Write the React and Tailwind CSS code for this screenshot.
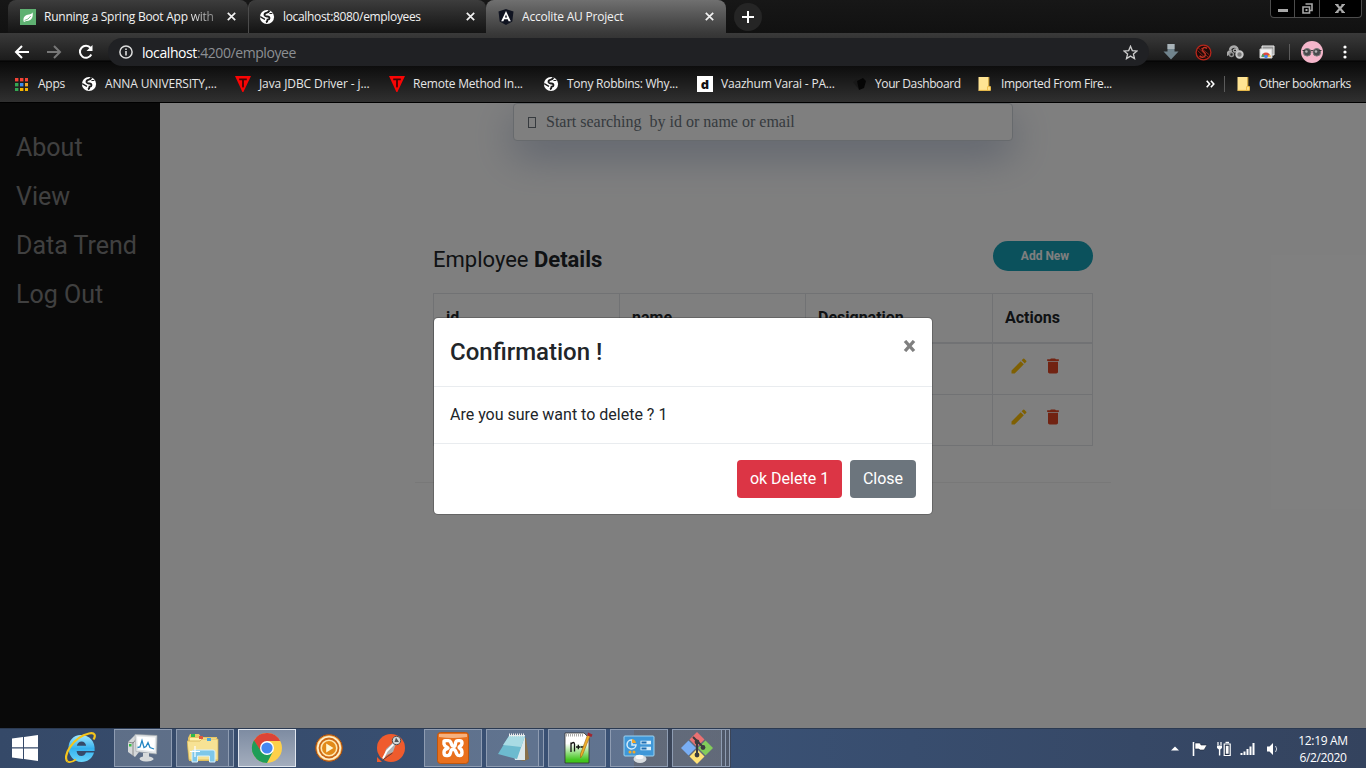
import React from "react";

const Globe = () => (
  <svg width="16" height="16" viewBox="0 0 16 16" className="shrink-0">
    <circle cx="8" cy="8" r="7.1" fill="#fff" />
    <path d="M10.6 1.6Q9.4 3.6 7.2 3.9 5.2 4.6 5.6 6.3 6 7.6 8.4 7.4 10.6 7.6 10.4 9.4 10.4 10.4 8.6 10.6 8.4 12.8 7 13.4" stroke="#1c1c1c" strokeWidth="1.9" fill="none" />
    <path d="M1.2 7.6 4.6 9.6 6 10.4" stroke="#1c1c1c" strokeWidth="1.3" fill="none" />
    <path d="M10.4 4.6 13.4 4.4" stroke="#1c1c1c" strokeWidth="1" />
  </svg>
);

const Close = () => (
  <svg width="9" height="9" viewBox="0 0 9 9" className="shrink-0">
    <path d="M.8.8 8.2 8.2M8.2.8.8 8.2" stroke="#f1f1f1" strokeWidth="1.7" />
  </svg>
);

const TIcon = () => (
  <svg width="16" height="16" viewBox="0 0 16 16" className="shrink-0">
    <path d="M0 0H16L8.4 16H7.4Z" fill="#f90505" />
    <path d="M4.2 2.6H11.8V4.2H8.9V10.5L8 12 7.1 10.5V4.2H4.2Z" fill="#3c0606" />
  </svg>
);

const Folder = () => (
  <svg width="13" height="14" viewBox="0 0 13 14" className="shrink-0">
    <path d="M.5 0H10.5V9.5H12.5V13.5H.5Z" fill="#ffe493" />
    <path d="M.5 13.4H12.4V9.6H9.6V13.4M10.8 0V9" stroke="#efbd48" fill="none" />
  </svg>
);

function Tabs() {
  return (
    <div className="flex h-[33px] bg-gradient-to-b from-[#171717] to-[#111] pl-2">
      <div className="flex h-[33px] w-[240px] items-center rounded-t-lg bg-gradient-to-b from-[#3d3d3d] to-[#141414] pl-3 pr-[12px]">
        <svg width="16" height="16" viewBox="0 0 16 16" className="shrink-0">
          <rect width="16" height="16" fill="#5fb172" />
          <path d="M3.5 12C3 7.5 6 6 8.8 5.6 10.8 5.3 12 4.6 12.6 3.2 13.6 8.5 11 12.3 6.2 11.9L4 13Z" fill="#fff" />
          <path d="M4.6 11.4Q8.4 10.8 10.8 7" stroke="#5fb172" fill="none" strokeWidth=".8" />
        </svg>
        <span className="ml-2 w-[174px] overflow-hidden whitespace-nowrap tracking-[-0.25px]">
          Running a Spring Boot App <span className="bg-gradient-to-r from-[#f2f2f2] to-[#8a8a8a] bg-clip-text text-transparent">with</span>
        </span>
        <span className="ml-auto flex"><Close /></span>
      </div>
      <div className="flex h-[33px] w-[238px] items-center rounded-t-lg border-l border-[#4b4b4b] bg-gradient-to-b from-[#3d3d3d] to-[#141414] pl-[10px] pr-[11px]">
        <Globe />
        <span className="ml-2 whitespace-nowrap tracking-[-0.34px]">localhost:8080/employees</span>
        <span className="ml-auto flex"><Close /></span>
      </div>
      <div className="flex h-[33px] w-[240px] items-center rounded-t-lg bg-gradient-to-b from-[#707070] to-[#3a3a3a] pl-3 pr-[12px]">
        <svg width="16" height="16" viewBox="0 0 16 16" className="shrink-0">
          <path d="M8 0 15.5 2.6 14.3 12.5 8 16 1.7 12.5.5 2.6Z" fill="#101421" />
          <path d="M8 2 12.8 12.2H10.6L9.8 10.2H6.2L5.4 12.2H3.2ZM8 5.4 6.9 8.4H9.1Z" fill="#fff" fillRule="evenodd" />
        </svg>
        <span className="ml-2 whitespace-nowrap tracking-[-0.2px]">Accolite AU Project</span>
        <span className="ml-auto flex"><Close /></span>
      </div>
      <div className="ml-2 mt-[3px] flex h-7 w-7 items-center justify-center rounded-full bg-[#252525]">
        <svg width="12" height="12" viewBox="0 0 12 12">
          <path d="M6 0V12M0 6H12" stroke="#fff" strokeWidth="2" />
        </svg>
      </div>
      <div className="ml-auto mr-1 flex h-[18px] w-[92px] rounded-b border-x border-b border-[#4c4c4c] bg-black">
        <div className="flex w-[24px] items-center justify-center border-r border-[#4c4c4c]">
          <span className="mt-[4px] h-[3px] w-[10px] bg-[#a8a8a8]" />
        </div>
        <div className="flex w-[25px] items-center justify-center border-r border-[#4c4c4c]">
          <svg width="11" height="11" viewBox="0 0 11 11">
            <path d="M3.5 1H10V7.5H8M1 4H7.5V10H1Z" stroke="#a8a8a8" strokeWidth="1.6" fill="none" />
            <rect x="3.5" y="6" width="2" height="2" fill="#a8a8a8" />
          </svg>
        </div>
        <div className="flex flex-1 items-center justify-center">
          <svg width="10" height="9" viewBox="0 0 10 9" className="mr-[2px]">
            <path d="M1.5.5 8.5 8.5M8.5.5 1.5 8.5" stroke="#a8a8a8" strokeWidth="2.2" />
            <path d="M0 .5H3.5M6.5.5H10M0 8.5H3.5M6.5 8.5H10" stroke="#a8a8a8" />
          </svg>
        </div>
      </div>
    </div>
  );
}

function Toolbar() {
  return (
    <div className="flex h-[33px] items-center pt-[5px]">
      <svg width="16" height="14" viewBox="0 0 16 14" className="ml-[14px] shrink-0">
        <path d="M15 7H2M8 1 2 7 8 13" stroke="#fff" strokeWidth="2" fill="none" />
      </svg>
      <svg width="16" height="14" viewBox="0 0 16 14" className="ml-[17px] shrink-0">
        <path d="M0 7H13M7 1 13 7 7 13" stroke="#777" strokeWidth="2" fill="none" />
      </svg>
      <svg width="16" height="16" viewBox="0 0 16 16" className="ml-[15px] shrink-0">
        <path d="M13.3 10.5A6 6 0 1 1 12.6 4" stroke="#fff" strokeWidth="2" fill="none" />
        <path d="M14.5 1V7H8.5Z" fill="#fff" />
      </svg>
      <div className="ml-[14px] flex h-7 w-[1041px] items-center rounded-full bg-[#202124] pl-[11px] pr-[11px]">
        <svg width="14" height="14" viewBox="0 0 14 14" className="shrink-0">
          <circle cx="7" cy="7" r="6.1" stroke="#ddd" strokeWidth="1.5" fill="none" />
          <path d="M7 6V10.5M7 3.5V5" stroke="#ddd" strokeWidth="1.6" />
        </svg>
        <span className="ml-[9px] text-[14px] tracking-[-0.42px] text-white">
          localhost<span className="text-[#8c8f93]">:4200/employee</span>
        </span>
        <svg width="15" height="15" viewBox="0 0 15 15" className="ml-auto">
          <path d="M7.5 1.3 9.3 5.6 14 6 10.4 9 11.5 13.6 7.5 11.1 3.5 13.6 4.6 9 1 6 5.7 5.6Z" stroke="#ccc" strokeWidth="1.3" fill="none" />
        </svg>
      </div>
      <svg width="16" height="16" viewBox="0 0 16 16" className="ml-[14px] shrink-0">
        <path d="M4.5 0H11.5V7.5H15.5L8 15.5.5 7.5H4.5Z" fill="#71848d" />
        <path d="M4.5 0H11.5V5H4.5Z" fill="#a9b3b8" />
      </svg>
      <svg width="17" height="17" viewBox="0 0 17 17" className="ml-4 shrink-0">
        <circle cx="8.5" cy="8.5" r="7.4" stroke="#b8261b" strokeWidth="1.3" fill="#1d0a08" />
        <path d="M12 4.5C10 2.6 7 3.6 7.4 6.2 7.8 8.3 11 8.6 10.4 11.2 9.8 13.6 6 13.8 4.6 11.8" stroke="#c33425" strokeWidth="1.5" fill="none" />
        <path d="M3 3.6 13.6 13.6M6 4 14 10.6M2.6 6.6 10.6 14" stroke="#9c2a1e" strokeWidth=".8" fill="none" />
      </svg>
      <svg width="17" height="14" viewBox="0 0 17 14" className="ml-[15px] shrink-0">
        <path d="M1 10.5A3 3 0 0 1 5 6.5M3 5A4 4 0 0 1 10 3L11 6" stroke="#aaa" strokeWidth="2.4" fill="none" />
        <circle cx="4.5" cy="9.5" r="2" stroke="#8f8f8f" strokeWidth="1.5" fill="none" />
        <circle cx="8" cy="5.5" r="1.6" stroke="#ddd" fill="none" />
        <circle cx="12.5" cy="9.5" r="3.2" stroke="#c8c8c8" strokeWidth="2" fill="#777" />
      </svg>
      <svg width="16" height="15" viewBox="0 0 16 15" className="ml-[15px] shrink-0">
        <path d="M3 1H15V10H3Z" fill="#999" stroke="#eee" />
        <path d="M1 4H13V13H1Z" fill="#f4f4f4" stroke="#ccc" />
        <path d="M2.5 12A4.5 4.5 0 0 1 11.5 12Z" fill="#de4a3c" />
        <path d="M2.5 12A4.5 4.5 0 0 1 4 8.6L6 12Z" fill="#4ba15a" />
        <path d="M11.5 12A4.5 4.5 0 0 0 10.6 9.2L8 12Z" fill="#f6c344" />
        <circle cx="7" cy="11.5" r="1.8" fill="#4382ea" />
      </svg>
      <div className="ml-[14px] h-4 w-px bg-[#5b5b5b]" />
      <svg width="22" height="22" viewBox="0 0 22 22" className="ml-[11px] shrink-0">
        <circle cx="11" cy="11" r="11" fill="#f5b6cb" />
        <circle cx="6.2" cy="11.3" r="3.8" fill="#47494c" stroke="#777" />
        <circle cx="15.8" cy="11.3" r="3.8" fill="#47494c" stroke="#777" />
        <path d="M9.5 10Q11 8.8 12.5 10M1.5 9.5H4M18 9.5H20.5" stroke="#333" fill="none" />
        <circle cx="5.4" cy="10.5" r="1.3" fill="#b3b3b3" /><circle cx="15" cy="10.5" r="1.3" fill="#b3b3b3" />
      </svg>
      <svg width="4" height="14" viewBox="0 0 4 14" className="ml-5 shrink-0">
        <circle cx="2" cy="2" r="1.6" fill="#fff" /><circle cx="2" cy="7" r="1.6" fill="#fff" /><circle cx="2" cy="12" r="1.6" fill="#fff" />
      </svg>
    </div>
  );
}

function Bookmark({ icon, label, box, text }) {
  return (
    <div className={`flex shrink-0 items-center whitespace-nowrap ${box}`}>
      {icon}
      <span className={text}>{label}</span>
    </div>
  );
}

function Bookmarks() {
  const dots = ["#f44336", "#f44336", "#f44336", "#34a853", "#3b8bf0", "#f0a728", "#34a853", "#f5b400", "#f5b400"];
  return (
    <div className="flex h-9 items-center pl-[15px] text-[#e6e6e6]">
      <Bookmark box="w-[66px]" text="ml-[10px] tracking-[-0.25px]" label="Apps" icon={
        <svg width="13" height="13" viewBox="0 0 13 13" className="shrink-0">
          {dots.map((c, i) => <rect key={i} x={(i % 3) * 5} y={Math.floor(i / 3) * 5} width="3.4" height="3.4" fill={c} />)}
        </svg>} />
      <Bookmark box="w-[154px]" text="ml-2 tracking-[-0.14px]" label="ANNA UNIVERSITY,..." icon={<Globe />} />
      <Bookmark box="w-[154px]" text="ml-2 tracking-[-0.1px]" label="Java JDBC Driver - j..." icon={<TIcon />} />
      <Bookmark box="w-[154px]" text="ml-2 tracking-[-0.2px]" label="Remote Method In..." icon={<TIcon />} />
      <Bookmark box="w-[154px]" text="ml-2 tracking-[-0.25px]" label="Tony Robbins: Why..." icon={<Globe />} />
      <Bookmark box="w-[155px]" text="ml-2 tracking-[-0.2px]" label="Vaazhum Varai - PA..." icon={
        <span className="flex h-4 w-4 items-center justify-center bg-white font-['Open_Sans',sans-serif] text-[13px] font-extrabold leading-[14px] text-[#111]">d</span>} />
      <Bookmark box="w-[126px]" text="ml-2 tracking-[-0.4px]" label="Your Dashboard" icon={
        <svg width="15" height="15" viewBox="0 0 15 15" className="shrink-0">
          <path d="M1 5 5 2 7 12 4 9Z" fill="#181818" /><path d="M5 4 11 1 14 4 12 11 7 13Z" fill="#050505" />
        </svg>} />
      <Bookmark box="w-[226px]" text="ml-[10px] tracking-[-0.35px]" label="Imported From Fire..." icon={<Folder />} />
      <svg width="9" height="8" viewBox="0 0 9 8" className="ml-[2px] shrink-0">
        <path d="M.7.8 3.6 4 .7 7.2M4.9.8 7.8 4 4.9 7.2" stroke="#fff" strokeWidth="1.6" fill="none" />
      </svg>
      <div className="ml-[9px] mr-[12px] h-4 w-px shrink-0 bg-[#5b5b5b]" />
      <Bookmark box="w-[120px]" text="ml-[9px] tracking-[-0.45px]" label="Other bookmarks" icon={<Folder />} />
    </div>
  );
}

const Pencil = () => (
  <svg width="20" height="20" viewBox="0 0 24 24" fill="#ffc107">
    <path d="M3 17.25V21h3.75L17.81 9.94l-3.75-3.75L3 17.25zM20.71 7.04a1 1 0 0 0 0-1.41l-2.34-2.34a1 1 0 0 0-1.41 0l-1.83 1.83 3.75 3.75 1.83-1.83z" />
  </svg>
);
const Trash = () => (
  <svg width="20" height="20" viewBox="0 0 24 24" fill="#e34724">
    <path d="M6 19c0 1.1.9 2 2 2h8c1.1 0 2-.9 2-2V7H6v12zM19 4h-3.5l-1-1h-5l-1 1H5v2h14V4z" />
  </svg>
);

function EmployeePage() {
  const cell = "border border-[#e3e5e8] p-3 text-left";
  return (
    <div className="flex h-[625px] bg-white">
      <nav className="flex w-40 flex-col bg-[#131313] pl-4 pt-5 text-[25px] text-[#818181]">
        {["About", "View", "Data Trend", "Log Out"].map((t) => (
          <a key={t} className="flex h-[49px] items-center">{t}</a>
        ))}
      </nav>
      <main className="flex-1">
        <div className="ml-[353px] flex h-[38px] w-[500px] items-center whitespace-pre rounded border border-[#ced4da] bg-white pl-[14px] font-['Liberation_Serif',serif] text-[16px] text-[#6c757d] shadow-[0_15px_40px_rgba(110,130,175,0.46)]">
          <span className="mr-[10px] h-[11px] w-2 border border-[#6c757d]" />
          Start searching  by id or name or email
        </div>
        <section className="ml-[255px] mt-[100px] h-[242px] w-[696px] border-b border-[#f0f0f0] px-[18px] text-[#212529]">
          <div className="flex h-[52px] items-start justify-between">
            <h2 className="pt-[2px] text-[22px] leading-[33px]">Employee <b>Details</b></h2>
            <button className="h-[30px] w-[100px] rounded-full bg-[#17a2b8] pl-[4px] text-[12px] font-bold text-white">Add New</button>
          </div>
          <table className="w-[659px] table-fixed border-collapse">
            <colgroup><col className="w-[186px]" /><col className="w-[186px]" /><col className="w-[187px]" /><col className="w-[100px]" /></colgroup>
            <thead>
              <tr className="h-[49px]">
                {["id", "name", "Designation", "Actions"].map((t) => (
                  <th key={t} className="border border-b-2 border-[#e3e5e8] px-3 text-left font-bold">{t}</th>
                ))}
              </tr>
            </thead>
            <tbody>
              {["h-[52px]", "h-[51px]"].map((height) => (
                <tr key={height} className={height}>
                  <td className={cell} /><td className={cell} /><td className={cell} />
                  <td className="border border-[#e3e5e8] py-0 pl-4">
                    <div className="flex gap-[14px] pb-1.5"><Pencil /><Trash /></div>
                  </td>
                </tr>
              ))}
            </tbody>
          </table>
        </section>
      </main>
    </div>
  );
}

function ConfirmDialog() {
  return (
    <div className="absolute inset-0 bg-black/50">
      <div className="ml-[433px] mt-[214px] w-[500px] rounded-[5px] border border-black/20 bg-white bg-clip-padding text-[#212529]">
        <div className="flex h-[69px] items-start justify-between border-b border-[#e9ecef] px-4 pt-4">
          <h4 className="text-[24px] font-medium leading-9">Confirmation !</h4>
          <svg width="13" height="12" viewBox="0 0 13 12" className="mt-[6px]">
            <path d="M2 1 11 11M11 1 2 11" stroke="#7f7f7f" strokeWidth="3.3" />
          </svg>
        </div>
        <div className="flex h-[57px] items-center border-b border-[#e9ecef] px-4 pb-px text-[16px]">Are you sure want to delete ? 1</div>
        <div className="flex h-[70px] items-center justify-end gap-2 px-4 text-[16px] text-white">
          <button className="h-[38px] w-[105px] rounded bg-[#dc3545]">ok Delete 1</button>
          <button className="h-[38px] w-[66px] rounded bg-[#6c757d]">Close</button>
        </div>
      </div>
    </div>
  );
}

function Task({ children, open, active, stack = 0 }) {
  const frame = active
    ? "border-[#dfe5ee] bg-gradient-to-b from-[#7e8ca2] to-[#a3adbd]"
    : open ? "border-[#8e9cb2] bg-white/20" : "border-transparent";
  return (
    <div className="mr-[4px] flex h-[38px] w-[58px]">
      <div className={`flex flex-1 items-center justify-center border ${frame}`}>{children}</div>
      {Array.from({ length: stack }, (_, i) => (
        <div key={i} className={`border-y border-r border-[#8e9cb2] bg-white/10 ${stack > 1 ? "w-1" : "w-[5px]"}`} />
      ))}
    </div>
  );
}

const Icon = ({ children }) => <svg width="32" height="32" viewBox="0 0 32 32" className="shrink-0">{children}</svg>;

function Taskbar() {
  return (
    <div className="flex h-10 items-start border-t border-[#2b3a52] bg-[linear-gradient(to_right,transparent_634px,rgba(60,50,45,0.4)_634px,rgba(60,50,45,0.4)_731px,transparent_731px),linear-gradient(to_right,#354968,#3a5276,#34435e)]">
      <div className="flex h-[38px] w-[50px] items-center justify-center">
        <svg width="26" height="26" viewBox="0 0 26 26">
          <path d="M0 3.5 11 2V12.3H0ZM12 1.9 26 0V12.3H12ZM0 13.4H11V24L0 22.5ZM12 13.4H26V26L12 24.1Z" fill="#fff" />
        </svg>
      </div>
      <div className="w-[2px]" />
      <Task>
        <Icon>
          <defs><linearGradient id="ie" x1="0" y1="0" x2="0" y2="1"><stop stopColor="#a2e8ff" /><stop offset=".5" stopColor="#35b2f0" /><stop offset="1" stopColor="#69d5fb" /></linearGradient></defs>
          <path d="M16 3C8 3 3.5 9 3.5 16S8.5 30 16.5 30C23 30 27.5 26 29 20.5H21C20 23 18.5 24 16.4 24 13.6 24 11.8 22 11.6 19H29.6C30.6 9.5 24.5 3 16 3ZM11.8 13.8C12.4 11 14 9.4 16.6 9.4 19.1 9.4 20.8 11 21.1 13.8Z" fill="url(#ie)" />
          <path d="M2.5 29.5C-3 24.5 8 5 24 1.5 30 .2 31 3.5 28.5 7.5" fill="none" stroke="#f6c51c" strokeWidth="2.2" />
          <path d="M2.5 29.5C4.5 31 8 29.5 11 27.4" fill="none" stroke="#f6c51c" strokeWidth="1.8" />
        </Icon>
      </Task>
      <Task open>
        <Icon>
          <path d="M1 10 8 3 12 4V20L8 25 1 20Z" fill="#d4d7d9" /><path d="M6 10V24M1 10 6 11 12 4" stroke="#777" strokeWidth=".8" fill="none" />
          <rect x="2" y="12" width="2.5" height="2.5" fill="#36be40" />
          <path d="M8 2.5 30 3.5 29.5 22 9 19.5Z" fill="#e3e6e8" stroke="#a5abae" strokeWidth=".7" /><path d="M10 4.5 28 5.4 27.5 19.5 11 17.5Z" fill="#fff" />
          <path d="M10.5 15.5 13 15 15 8.5 17 15.5 19 14.5 21 10.5 23 15.5 27 17" stroke="#2385c3" strokeWidth="1.3" fill="none" />
          <path d="M16 21H22V24.5Q27 25.5 26.5 27.5 24 30 18.5 29.5 13 29 12.5 26.5 13 25 16 24.5Z" fill="#d7dadb" />
        </Icon>
      </Task>
      <Task open stack={1}>
        <Icon>
          <path d="M1 6 3 2H12L14 5H30L31 29H2Z" fill="#e8c765" /><path d="M3 6H29V28H3Z" fill="#fff0a8" />
          <path d="M0 9H13L15 7H31V28H2Z" fill="#f7e294" stroke="#cfad4c" strokeWidth=".7" />
          <rect x="4" y="2" width="4" height="3" fill="#2fb94b" /><rect x="12" y="4" width="4" height="3" fill="#db5740" /><rect x="20" y="6" width="4" height="3" fill="#4aa6dd" />
          <path d="M5 30V20Q5 18 7 18H26Q28 18 28 20V30H22.5V24H10.5V30Z" fill="#7ec7e9" stroke="#d8f1fb" />
          <path d="M8 14V25M3 19.5H13" stroke="#fff" strokeWidth="1.2" />
        </Icon>
      </Task>
      <Task active>
        <Icon>
          <circle cx="16" cy="16" r="15" fill="#fdd04b" />
          <path d="M3 8.5 9.9 19.5 16 23 22 19.5 16 31A15 15 0 0 1 3 8.5Z" fill="#1f9d58" />
          <path d="M3 8.5A15 15 0 0 1 29.2 9H16L10 19Z" fill="#dc4437" />
          <path d="M3 8.5 9.9 19.5 14 22 9 12Z" fill="#1f9d58" />
          <path d="M3 8.5 9.6 18.5Q9 12 16 9Z" fill="#dc4437" />
          <path d="M3 8.5Q-1 16 3 23L14 24 9.6 19.3Z" fill="#1f9d58" />
          <circle cx="16" cy="16" r="7" fill="#fff" /><circle cx="16" cy="16" r="5.6" fill="#4587f2" />
        </Icon>
      </Task>
      <Task>
        <svg width="28" height="28" viewBox="0 0 28 28">
          <circle cx="14" cy="14" r="13.4" fill="#f0ad50" stroke="#a5490e" /><circle cx="14" cy="14" r="12" fill="#fff0cb" />
          <circle cx="14" cy="14" r="10.4" fill="#cc6814" /><circle cx="14" cy="14" r="8.6" fill="#ffe9b2" /><circle cx="14" cy="14" r="7" fill="#e28a19" />
          <path d="M11.2 9.5 18.5 14 11.2 18.5Z" fill="#fff6d2" />
        </svg>
      </Task>
      <Task>
        <Icon>
          <circle cx="16" cy="16" r="14" fill="#ef5b2d" /><path d="M2 25V30H7Z" fill="#ef5b2d" />
          <path d="M7 28 9.5 23 11 17 18 10.5 20.5 13 18 20 12 23Z" fill="#aeb1b3" /><path d="M8 26.5 11.8 19 18.4 12.4" stroke="#fff" strokeWidth="1.8" fill="none" />
          <path d="M7 28.5 12.5 24.5 17.5 21" stroke="#5d4038" fill="none" />
          <circle cx="21.5" cy="8.5" r="4.2" fill="#d3d7d8" stroke="#4e5356" /><path d="M21 5.5 24 10H19.5Z" fill="#4e5356" />
        </Icon>
      </Task>
      <Task open>
        <Icon>
          <rect x=".5" y=".5" width="31" height="31" rx="3" fill="#e9701d" stroke="#bd560e" />
          <path d="M2 2H30V5Q16 7 2 5Z" fill="#f6b17f" />
          <path d="M7 12V9.4Q7 8.6 8 8.6H11.4Q13 8.6 13.6 10L15 13.4Q15.4 14.4 16.6 14.4 18 14.4 18.2 13L18.6 10.6Q19 8.6 20.8 8.6H22.6Q25 8.6 25 11T22.8 14.4Q21.4 15.4 22.8 16.4 25 17.4 25 20.4T22.6 23.6Q20.6 23.6 19.8 22L18.4 18.8Q17.8 17.4 16 17.4T13.8 19.4L13.2 21.6Q12.6 23.6 10.6 23.6H9.6Q7 23.6 7 20.8T9 17.2L11 16Q9.6 14.6 8 14Z" fill="none" stroke="#fff" strokeWidth="3.4" strokeLinejoin="round" />
        </Icon>
      </Task>
      <Task open stack={1}>
        <Icon>
          <path d="M26 5 29 6 32 27 27 29 22 28Z" fill="#87704b" />
          <path d="M12 3H28L28 28 18 28Z" fill="#dbe8ec" />
          <path d="M12 4H28L20 27 1 22Z" fill="#6dbbcf" /><path d="M12 4H28L24 15 6 13Z" fill="#a9dbe4" />
          <path d="M12 3H28" stroke="#eee" strokeWidth="3" strokeDasharray="1 1" />
        </Icon>
      </Task>
      <Task open>
        <Icon>
          <defs><linearGradient id="npp" x1="0" y1="0" x2="0" y2="1"><stop offset=".35" stopColor="#fff" /><stop offset=".9" stopColor="#42c51e" /></linearGradient></defs>
          <path d="M4 1H23L28 6V31H4Z" fill="url(#npp)" stroke="#333" strokeWidth=".8" />
          <path d="M5 3H22" stroke="#aaa" strokeWidth="3" strokeDasharray="1 1" />
          <path d="M10 20V10.5M10 12Q13 9 13.5 12V19.5M15 15H19.6M17.3 12.7V17.3M20 15H23" stroke="#111" strokeWidth="1.3" fill="none" />
          <path d="M29 4 21.5 23 19.5 26 19.5 22 26.5 3Z" fill="#f0ae29" stroke="#9b6615" strokeWidth=".6" /><path d="M27 .5 31.5 2.5 30.5 5 26.4 3.6Z" fill="#a12630" />
        </Icon>
      </Task>
      <Task open>
        <Icon>
          <rect x="1" y="4" width="30" height="20" rx="1" fill="#3f97d8" stroke="#9ed4f2" />
          <path d="M9 8A4.5 4.5 0 1 0 13 13H9Z" fill="none" stroke="#d4ecfa" strokeWidth="1.5" /><path d="M9 7A5 5 0 0 1 13 11H9Z" fill="#f2a82b" />
          <path d="M17.5 10.5H28M17.5 16.5H28" stroke="#d9effb" strokeWidth="3.4" /><path d="M18.5 10.5H23.5M18.5 16.5H23.5" stroke="#1f6cb0" strokeWidth="1.8" />
          <circle cx="7" cy="20" r="1.5" fill="#f2a82b" /><circle cx="11" cy="20" r="1.5" fill="#f2a82b" />
          <ellipse cx="17" cy="27" rx="6.5" ry="4" fill="#d8dcdf" /><ellipse cx="16.5" cy="25" rx="4" ry="2.2" fill="#f6f7f8" />
        </Icon>
      </Task>
      <Task open stack={2}>
        <Icon>
          <path d="M16 0 23.5 7.5 16 15 8.5 7.5Z" fill="#ea7172" /><path d="M24.5 8.5 32 16 24.5 23.5 17 16Z" fill="#83cc5b" />
          <path d="M7.5 8.5 15 16 7.5 23.5 0 16Z" fill="#79aef4" /><path d="M16 17 23.5 24.5 16 32 8.5 24.5Z" fill="#ffe276" />
          <path d="M12 5 16 9V23M16 9 22 15" stroke="#3b3b3f" strokeWidth="2" fill="none" />
          <circle cx="16" cy="10" r="2.4" fill="#3b3b3f" /><circle cx="22" cy="15.5" r="2.4" fill="#3b3b3f" /><circle cx="16" cy="23" r="2.4" fill="#3b3b3f" />
        </Icon>
      </Task>
      <div className="ml-auto flex h-[39px] items-center">
        <svg width="8" height="5" viewBox="0 0 8 5"><path d="M0 4.5 4 .5 8 4.5Z" fill="#fff" /></svg>
        <svg width="16" height="16" viewBox="0 0 16 16" className="ml-[13px]">
          <path d="M1.5 1V15" stroke="#fff" strokeWidth="1.6" /><path d="M3 2H8L9 4H15L12 9H8L7 8H3Z" fill="#fff" stroke="#1d2738" strokeWidth=".6" />
        </svg>
        <svg width="16" height="16" viewBox="0 0 16 16" className="ml-2">
          <path d="M2 1V4M5 1V4" stroke="#fff" strokeWidth="1.2" /><path d="M1 4.5H6V7L4.3 8.6V14.5H2.9V8.6L1 7Z" fill="#fff" />
          <path d="M8.2 3H14.2V14.5H8.2Z" stroke="#fff" strokeWidth="1.2" fill="#243148" /><path d="M9.8 4.8H12.6V12.8H9.8Z" fill="#fff" /><path d="M9.5 1.5H13" stroke="#fff" strokeWidth="1.4" />
        </svg>
        <svg width="16" height="14" viewBox="0 0 16 14" className="ml-2">
          <path d="M1.5 11V13M4.5 9.5V13M7.5 7V13M10.5 4.5V13M13.5 1V13" stroke="#fff" strokeWidth="2" />
        </svg>
        <svg width="14" height="14" viewBox="0 0 14 14" className="ml-[10px]">
          <path d="M1 4.5H3.5L7 1V13L3.5 9.5H1Z" fill="#fff" /><path d="M9.5 4Q12 7 9.5 10" stroke="#cbd1da" fill="none" />
        </svg>
        <div className="ml-2 mr-[8px] w-[70px] text-center text-[12px] leading-[17px] tracking-[-0.35px] text-white">
          12:19 AM<br />6/2/2020
        </div>
      </div>
    </div>
  );
}

export default function App() {
  return (
    <div className="h-[768px] w-[1366px] overflow-hidden font-['Roboto',sans-serif] text-[16px]">
      <header className="font-['Open_Sans','Noto_Sans',sans-serif] text-[12px] text-[#f2f2f2]">
        <Tabs />
        <div className="h-[70px] border-b border-black bg-[linear-gradient(#3a3a3a_0px,#1c1c1c_27px,#000_28px,#0a0a0a_29px,#0e0e0e_34px,#303030_69px)]">
          <Toolbar />
          <Bookmarks />
        </div>
      </header>
      <div className="relative flow-root overflow-hidden">
        <EmployeePage />
        <ConfirmDialog />
      </div>
      <footer className="font-['Open_Sans','Noto_Sans',sans-serif]"><Taskbar /></footer>
    </div>
  );
}
